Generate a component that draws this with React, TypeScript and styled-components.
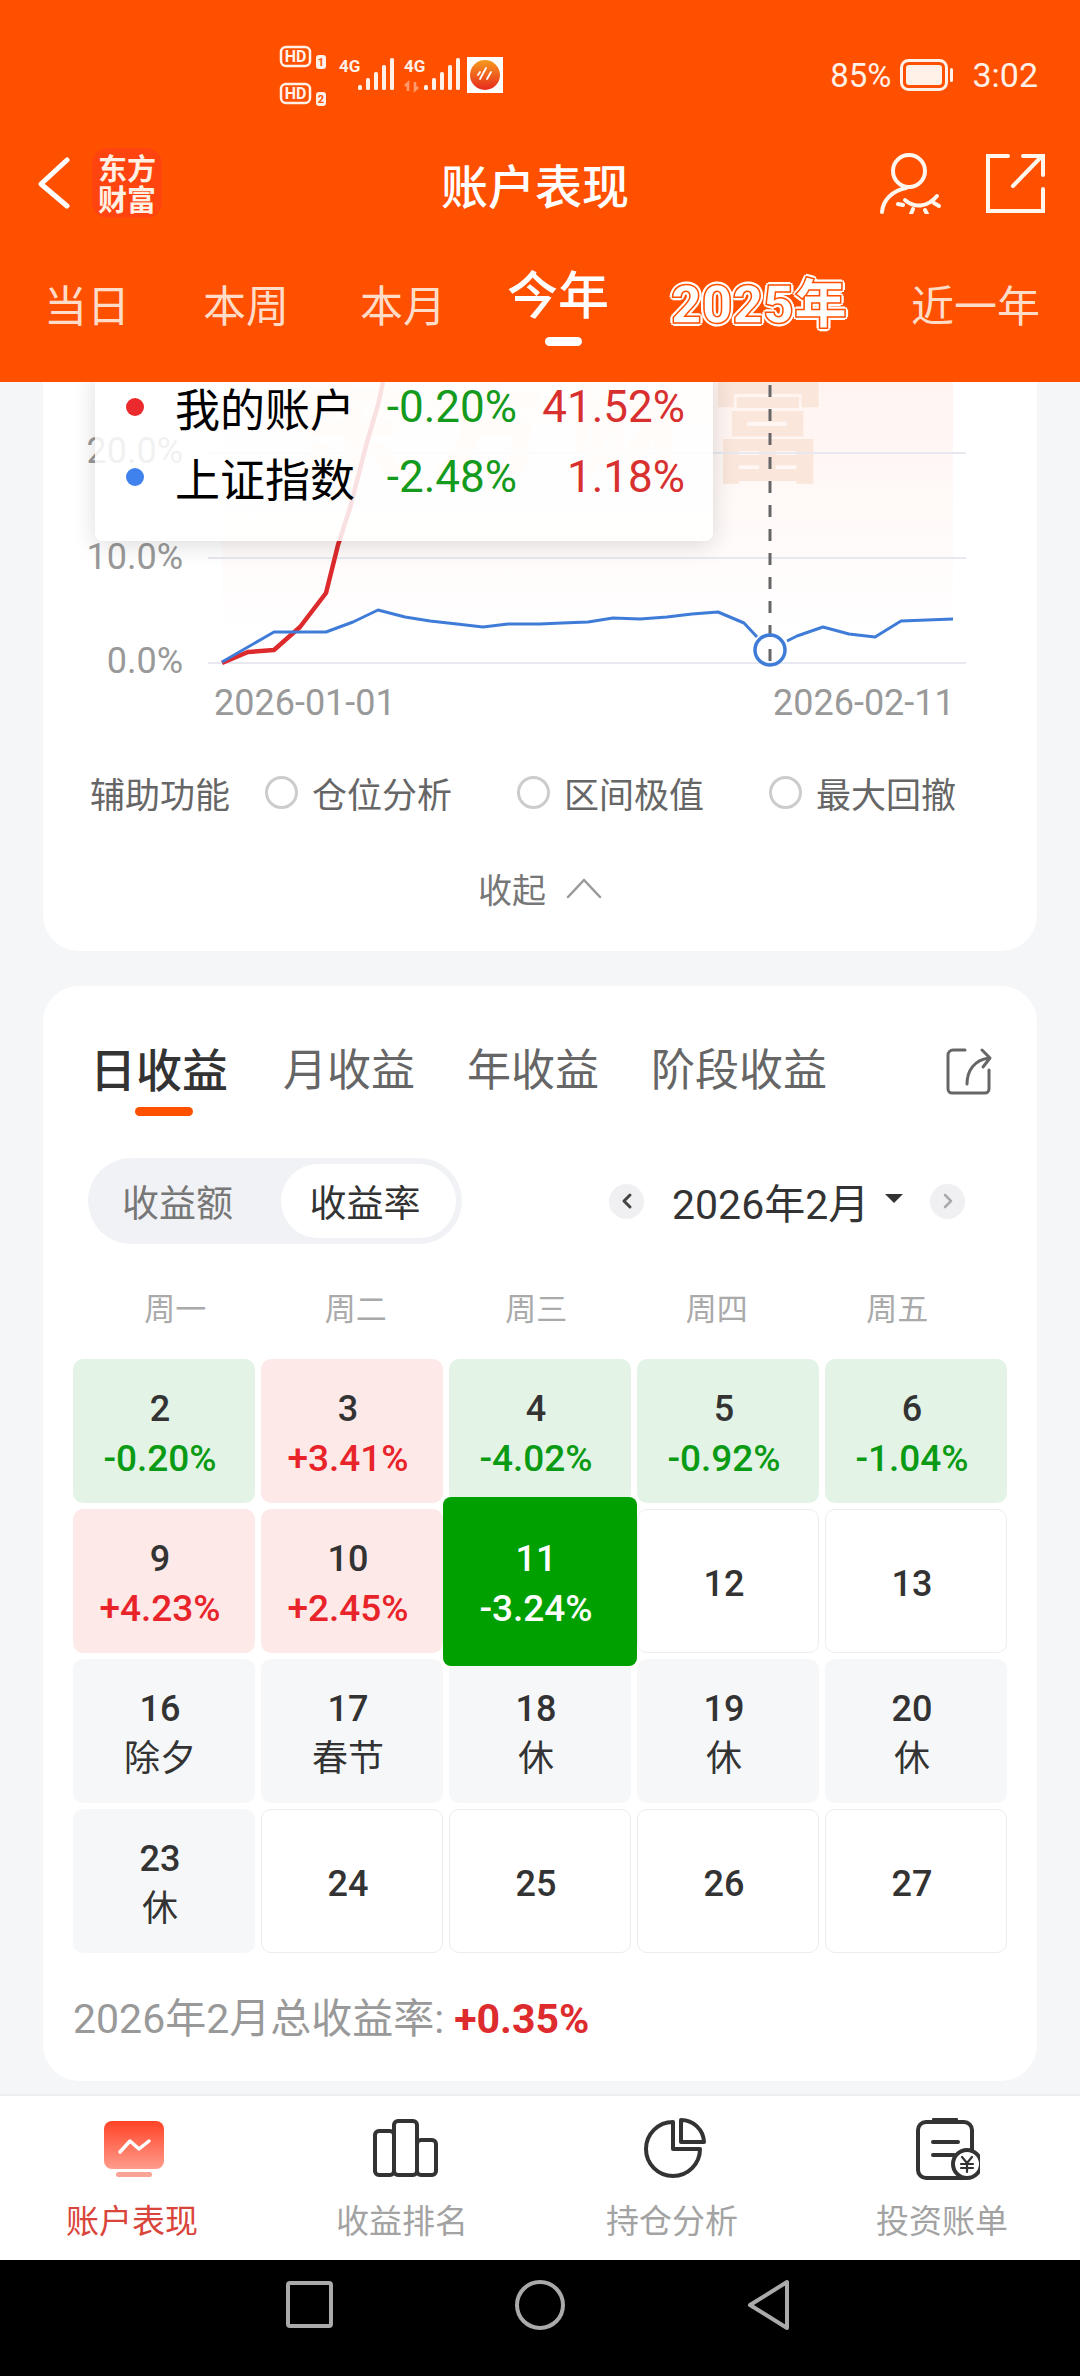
import React from 'react';
import styled, { createGlobalStyle } from 'styled-components';
import { ChevronLeft, ChevronRight } from 'lucide-react';

const GlobalStyle = createGlobalStyle`
  html, body {
    margin: 0;
    padding: 0;
    background: #000;
  }
  * {
    box-sizing: border-box;
  }
`;

const FONT = `Roboto, "Noto Sans CJK SC", sans-serif`;
const ORANGE = '#ff5000';

// ======= Page shell =======
const Page = styled.div`
  width: 1080px;
  height: 2376px;
  display: flex;
  flex-direction: column;
  overflow: hidden;
  font-family: ${FONT};
  background: #f5f6f8;
`;

const Header = styled.header`
  height: 382px;
  flex-shrink: 0;
  background: ${ORANGE};
  color: #fff;
  position: relative;
  z-index: 2;
`;

const StatusBar = styled.div`
  height: 110px;
  padding: 40px 42px 0 275px;
  display: flex;
  align-items: center;
  color: #fff1e8;
  font-size: 33px;
`;

const StatusRight = styled.div`
  margin-left: auto;
  display: flex;
  align-items: center;
  gap: 9px;
`;

const ClockText = styled.span`
  margin-left: 9px;
  font-size: 34px;
`;

const TopBar = styled.div`
  height: 100px;
  margin-top: 23px;
  padding: 0 34px 0 38px;
  display: flex;
  align-items: center;
`;

const BackGroup = styled.div`
  width: 154px;
  display: flex;
  align-items: center;
  gap: 22px;
`;

const LogoBadge = styled.div`
  width: 70px;
  height: 70px;
  flex-shrink: 0;
  border-radius: 16px;
  background: #ff4410;
  color: #fff0e4;
  display: flex;
  align-items: center;
  justify-content: center;
  text-align: center;
  font-size: 29px;
  line-height: 31px;
  font-weight: 700;
  font-family: "Noto Sans CJK SC", sans-serif;
`;

const PageTitle = styled.h1`
  flex: 1;
  margin: 0;
  text-align: center;
  font-size: 47px;
  font-weight: 500;
`;

const TopIcons = styled.div`
  width: 168px;
  display: flex;
  align-items: center;
  justify-content: space-between;
`;

const RangeTabs = styled.nav`
  height: 100px;
  margin-top: 49px;
  padding-left: 44px;
  display: flex;
  align-items: flex-start;
`;

const RangeTab = styled.div<{ $left: number; $active?: boolean; $loud?: boolean }>`
  margin-left: ${(p) => p.$left}px;
  position: relative;
  white-space: nowrap;
  font-size: ${(p) => (p.$active ? 51 : p.$loud ? 53 : 43)}px;
  line-height: ${(p) => (p.$active ? 60 : 50)}px;
  margin-top: ${(p) => (p.$active ? -15 : p.$loud ? -2 : 0)}px;
  font-weight: ${(p) => (p.$active ? 500 : p.$loud ? 900 : 400)};
  color: ${(p) => (p.$active || p.$loud ? '#fff' : '#ffdcc8')};
  ${(p) => p.$loud && `
    -webkit-text-stroke: 1.5px ${ORANGE};
    text-shadow: 3px 0 0 #fff, -3px 0 0 #fff, 0 3px 0 #fff, 0 -3px 0 #fff,
      2px 2px 0 #fff, -2px 2px 0 #fff, 2px -2px 0 #fff, -2px -2px 0 #fff;
  `}
  ${(p) => p.$active && `
    &::after {
      content: '';
      position: absolute;
      left: 38px;
      top: 70px;
      width: 37px;
      height: 9px;
      border-radius: 5px;
      background: #fff;
    }
  `}
`;

// ======= Content =======
const Content = styled.main`
  flex: 1;
  min-height: 0;
  overflow: hidden;
  padding: 0 43px;
  display: flex;
  flex-direction: column;
  gap: 35px;
`;

const Card = styled.section`
  background: #fff;
  border-radius: 36px;
`;

const ChartCard = styled(Card)`
  border-radius: 0 0 36px 36px;
  padding-bottom: 38px;
  overflow: hidden;
`;

const ChartWrap = styled.div`
  position: relative;
  height: 343px;

  svg {
    display: block;
  }
`;

const Tooltip = styled.div`
  position: absolute;
  left: 52px;
  top: -10px;
  width: 618px;
  height: 169px;
  padding-left: 31px;
  border-radius: 8px;
  background: rgba(255, 255, 255, 0.86);
  box-shadow: 0 4px 24px rgba(0, 0, 0, 0.14);
`;

const TipRow = styled.div`
  height: 70px;
  display: grid;
  grid-template-columns: 18px 31px 211px 131px 168px;
  align-items: center;
  font-size: 44px;
`;

const TipDot = styled.i<{ $color: string }>`
  width: 18px;
  height: 18px;
  border-radius: 50%;
  background: ${(p) => p.$color};
`;

const TipName = styled.span`
  grid-column: 3;
  color: #000;
  font-size: 45px;
  white-space: nowrap;
`;

const TipValue = styled.span<{ $color: string }>`
  text-align: right;
  color: ${(p) => p.$color};
`;

const AuxRow = styled.div`
  height: 50px;
  margin-top: 42px;
  padding-left: 47px;
  display: flex;
  align-items: center;
  color: #666;
  font-size: 35px;
`;

const AuxLabel = styled.span`
  width: 175px;
  white-space: nowrap;
`;

const AuxOption = styled.label`
  display: flex;
  align-items: center;
  gap: 14px;
  margin-right: 65px;
  white-space: nowrap;
`;

const RadioDot = styled.span`
  width: 33px;
  height: 33px;
  border-radius: 50%;
  border: 3px solid #ccc;
`;

const CollapseRow = styled.div`
  height: 50px;
  margin-top: 46px;
  display: flex;
  align-items: center;
  justify-content: center;
  gap: 20px;
  color: #777;
  font-size: 34px;
`;

const ProfitCard = styled(Card)`
  padding: 60px 0 37px;
`;

const ProfitTabs = styled.div`
  height: 50px;
  padding: 0 44px 0 47px;
  display: flex;
  align-items: center;
  gap: 52px;
`;

const ProfitTab = styled.div<{ $active?: boolean }>`
  position: relative;
  line-height: 50px;
  font-size: ${(p) => (p.$active ? 46 : 44)}px;
  font-weight: ${(p) => (p.$active ? 500 : 400)};
  color: ${(p) => (p.$active ? '#333' : '#666')};
  margin-right: ${(p) => (p.$active ? 3 : 0)}px;
  white-space: nowrap;
  ${(p) => p.$active && `
    &::after {
      content: '';
      position: absolute;
      left: 45px;
      top: 61px;
      width: 58px;
      height: 9px;
      border-radius: 5px;
      background: ${ORANGE};
    }
  `}
`;

const ShareSlot = styled.div`
  margin-left: auto;
  display: flex;
`;

const ToolRow = styled.div`
  margin-top: 62px;
  padding-left: 45px;
  display: flex;
  align-items: center;
`;

const Segment = styled.div`
  width: 374px;
  height: 86px;
  padding: 6px;
  border-radius: 43px;
  background: #f1f2f5;
  display: flex;
`;

const SegmentItem = styled.div<{ $active?: boolean }>`
  flex: ${(p) => (p.$active ? '0 0 175px' : 1)};
  padding-right: ${(p) => (p.$active ? 7 : 20)}px;
  border-radius: 37px;
  display: flex;
  align-items: center;
  justify-content: center;
  font-size: 37px;
  color: ${(p) => (p.$active ? '#333' : '#777')};
  background: ${(p) => (p.$active ? '#fff' : 'transparent')};
`;

const MonthPicker = styled.div`
  margin-left: 147px;
  display: flex;
  align-items: center;
`;

const RoundButton = styled.div<{ $muted?: boolean }>`
  width: 35px;
  height: 35px;
  border-radius: 50%;
  background: #f0f0f2;
  color: ${(p) => (p.$muted ? '#aaa' : '#444')};
  display: flex;
  align-items: center;
  justify-content: center;
`;

const MonthText = styled.div`
  margin-left: 28px;
  font-size: 41px;
  color: #333;
  white-space: nowrap;
`;

const Caret = styled.i`
  width: 0;
  height: 0;
  margin: -6px 27px 0 16px;
  border-left: 9px solid transparent;
  border-right: 9px solid transparent;
  border-top: 9px solid #333;
`;

const WeekRow = styled.div`
  height: 40px;
  width: 945px;
  margin-top: 40px;
  padding-left: 42px;
  display: grid;
  grid-template-columns: repeat(5, 180.5px);
  align-items: center;
  text-align: center;
  color: #aaa;
  font-size: 31px;
`;

const DayGrid = styled.div`
  margin-top: 35px;
  padding-left: 30px;
  display: grid;
  grid-template-columns: repeat(5, 182px);
  grid-auto-rows: 144px;
  gap: 6px;
`;

type Tone = 'up' | 'down' | 'closed' | 'blank' | 'today';

const toneBg: Record<Tone, string> = {
  up: '#fde9e8',
  down: '#e3f4e6',
  closed: '#f6f7f9',
  blank: '#fff',
  today: '#00a000',
};

const DayCell = styled.div<{ $tone: Tone }>`
  padding: 5px 8px 0 0;
  border-radius: ${(p) => (p.$tone === 'today' ? 8 : 10)}px;
  background: ${(p) => toneBg[p.$tone]};
  border: ${(p) => (p.$tone === 'blank' ? '1px solid #ececec' : 'none')};
  margin: ${(p) => (p.$tone === 'today' ? '-12px -6px -13px' : 0)};
  position: relative;
  z-index: ${(p) => (p.$tone === 'today' ? 1 : 0)};
  display: flex;
  flex-direction: column;
  align-items: center;
  justify-content: center;
  color: ${(p) => (p.$tone === 'today' ? '#fff' : '#333')};
`;

const DayNum = styled.div`
  font-size: 36px;
  line-height: 50px;
  font-weight: 500;
`;

const DayNote = styled.div<{ $tone: Tone }>`
  font-size: ${(p) => (p.$tone === 'closed' ? 36 : 37)}px;
  line-height: 50px;
  font-weight: ${(p) => (p.$tone === 'closed' ? 400 : 500)};
  color: ${(p) => (p.$tone === 'up' ? '#e8242a' : p.$tone === 'down' ? '#0a9a14' : 'inherit')};
`;

const TotalLine = styled.div`
  margin-top: 41px;
  padding-left: 30px;
  line-height: 50px;
  font-size: 41px;
  color: #999;
`;

const TotalValue = styled.b`
  margin-left: 10px;
  font-weight: 700;
  color: #dd2b2e;
`;

// ======= Bottom =======
const BottomNav = styled.nav`
  height: 166px;
  flex-shrink: 0;
  background: #fff;
  border-top: 2px solid #eceded;
  display: grid;
  grid-template-columns: repeat(4, 270px);
`;

const NavItem = styled.div<{ $active?: boolean }>`
  display: flex;
  flex-direction: column;
  align-items: center;
  padding-top: 22px;
  font-size: 33px;
  color: ${(p) => (p.$active ? '#d9453a' : '#a3a3a3')};
`;

const NavIconSlot = styled.div`
  height: 62px;

  svg {
    display: block;
  }
`;

const NavLabel = styled.span`
  margin-top: 19px;
  padding-right: 6px;
  line-height: 46px;
`;

const SystemBar = styled.div`
  height: 116px;
  flex-shrink: 0;
  background: #000;
  display: flex;
  justify-content: flex-start;
  padding: 17px 0 0 284px;
`;

// ======= Data =======
const rangeTabs = [
  { label: '当日', left: 0 },
  { label: '本周', left: 73 },
  { label: '本月', left: 71 },
  { label: '今年', left: 61, active: true },
  { label: '2025年', left: 62, loud: true },
  { label: '近一年', left: 64 },
];

const days: { day: number; note?: string; tone: Tone }[] = [
  { day: 2, note: '-0.20%', tone: 'down' },
  { day: 3, note: '+3.41%', tone: 'up' },
  { day: 4, note: '-4.02%', tone: 'down' },
  { day: 5, note: '-0.92%', tone: 'down' },
  { day: 6, note: '-1.04%', tone: 'down' },
  { day: 9, note: '+4.23%', tone: 'up' },
  { day: 10, note: '+2.45%', tone: 'up' },
  { day: 11, note: '-3.24%', tone: 'today' },
  { day: 12, tone: 'blank' },
  { day: 13, tone: 'blank' },
  { day: 16, note: '除夕', tone: 'closed' },
  { day: 17, note: '春节', tone: 'closed' },
  { day: 18, note: '休', tone: 'closed' },
  { day: 19, note: '休', tone: 'closed' },
  { day: 20, note: '休', tone: 'closed' },
  { day: 23, note: '休', tone: 'closed' },
  { day: 24, tone: 'blank' },
  { day: 25, tone: 'blank' },
  { day: 26, tone: 'blank' },
  { day: 27, tone: 'blank' },
];

const redLine = '222,663 248,652 274,650 300,627 326,593 338,545 350,508 367,442 378,405 383,382';
const blueLine =
  '222,662 274,632 326,632 353,622 378,610 405,617 430,621 457,624 483,627 508,624 540,624 562,623 588,622 613,618 640,619 667,617 692,614 718,612 744,623 757,637';
const blueLineEnd = '787,641 797,636 823,627 849,634 875,637 901,621 953,619';

// ======= Drawings =======
const StatusIcons = () => {
  const bars = (x: number) =>
    [5, 12, 18, 25, 32].map((h, i) => (
      <rect key={i} x={x + i * 8} y={90 - h} width="4" height={h} rx="1.5" fill="#fff1e8" />
    ));
  const chip = (y: number, n: string) => (
    <g>
      <rect x="281" y={y} width="29" height="19" rx="5" fill="none" stroke="#fff1e8" strokeWidth="2.5" />
      <text x="295.5" y={y + 15} fontSize="16" fontWeight="700" fill="#fff1e8" textAnchor="middle">HD</text>
      <rect x="316" y={y + 8} width="10" height="14" rx="3" fill="#fff1e8" />
      <text x="321" y={y + 19} fontSize="11" fontWeight="700" fill={ORANGE} textAnchor="middle">{n}</text>
    </g>
  );
  return (
    <svg width="235" height="70" viewBox="275 40 235 70">
      {chip(47, '1')}
      {chip(84, '2')}
      <text x="339" y="72" fontSize="17" fontWeight="700" fill="#fff1e8">4G</text>
      {bars(358)}
      <text x="404" y="72" fontSize="17" fontWeight="700" fill="#fff1e8">4G</text>
      <path d="M408 91V83l-3 3M415 82v8l3-3" fill="none" stroke="#ff9a70" strokeWidth="2.5" />
      {bars(424)}
      <rect x="467" y="57" width="36" height="36" fill="#fff" />
      <circle cx="485" cy="75" r="15" fill="url(#appGrad)" />
      <path d="M480 72l-2 3M486 68l-6 11M491 72l-4 7" stroke="#fff" strokeWidth="1.8" strokeLinecap="round" />
      <defs>
        <linearGradient id="appGrad" x1="0" y1="0" x2="0" y2="1">
          <stop offset="0" stopColor="#f79a20" />
          <stop offset="1" stopColor="#e62a1c" />
        </linearGradient>
      </defs>
    </svg>
  );
};

const BatteryIcon = () => (
  <svg width="54" height="32" viewBox="0 0 54 32">
    <rect x="1.5" y="1.5" width="45" height="29" rx="7" fill="none" stroke="#fff1e8" strokeWidth="3" />
    <rect x="6" y="6" width="36" height="20" rx="3" fill="#fff1e8" />
    <rect x="50" y="9" width="3" height="14" rx="1.5" fill="#fff1e8" />
  </svg>
);

const BackIcon = () => (
  <svg width="32" height="52" viewBox="0 0 32 52" style={{ flexShrink: 0 }}>
    <path d="M29 3L3 27l26 22" fill="none" stroke="#fff" strokeWidth="5" strokeLinecap="round" strokeLinejoin="round" />
  </svg>
);

const WatchIcon = () => (
  <svg width="66" height="62" viewBox="878 148 66 62">
    <g fill="none" stroke="#fff6ee" strokeWidth="4" strokeLinecap="round">
      <circle cx="909" cy="167" r="16" />
      <path d="M882 208c1-12 10-21 24-24" />
      <path d="M905 196c9 8 22 8 32-4" />
      <path d="M903 201l-5-1M913 205l-2 5M925 206l2 4M934 199l5 3" />
    </g>
  </svg>
);

const ExportIcon = () => (
  <svg width="60" height="60" viewBox="986 150 60 60">
    <g fill="none" stroke="#fff6ee" strokeWidth="4" strokeLinecap="round">
      <path d="M1008 153h-20v55h55v-22" />
      <path d="M1013 183l29-30M1023 153h20v19" />
    </g>
  </svg>
);

const ShareIcon = () => (
  <svg width="48" height="48" viewBox="0 0 48 48">
    <g fill="none" stroke="#666" strokeWidth="3" strokeLinecap="round" strokeLinejoin="round">
      <path d="M20 3H8a5 5 0 0 0-5 5v34a4 4 0 0 0 4 4h33a4 4 0 0 0 4-4V23" />
      <path d="M22 37c0-13 7-24 22-26M37 3l8 8-7 9" />
    </g>
  </svg>
);

const UpChevron = () => (
  <svg width="36" height="22" viewBox="0 0 36 22">
    <path d="M2 20L18 3l16 17" fill="none" stroke="#999" strokeWidth="2.5" strokeLinecap="round" />
  </svg>
);

const PerformanceChart = () => (
  <svg width="994" height="343" viewBox="43 382 994 343" fontFamily={FONT}>
    <defs>
      <linearGradient id="areaFade" x1="0" y1="0" x2="0" y2="1">
        <stop offset="0" stopColor="#fff4f0" />
        <stop offset="0.6" stopColor="#fffbfa" />
        <stop offset="0.9" stopColor="#ffffff" />
      </linearGradient>
    </defs>
    <rect x="222" y="382" width="731" height="281" fill="url(#areaFade)" />
    <text x="290" y="472" fontSize="116" fontWeight="900" letterSpacing="24" fill="#fbe6dc">东方财富</text>
    {[453, 558, 663].map((y) => (
      <line key={y} x1="208" x2="966" y1={y} y2={y} stroke="#e8e9f0" strokeWidth="2" />
    ))}
    <g fontSize="36" fill="#999">
      <text x="183" y="463" textAnchor="end">20.0%</text>
      <text x="183" y="569" textAnchor="end">10.0%</text>
      <text x="183" y="673" textAnchor="end">0.0%</text>
      <text x="214" y="715">2026-01-01</text>
      <text x="773" y="715">2026-02-11</text>
    </g>
    <polyline points={redLine} fill="none" stroke="#dd2a2c" strokeWidth="4.5" strokeLinejoin="round" />
    <polyline points={blueLine} fill="none" stroke="#3f7cd8" strokeWidth="3" strokeLinejoin="round" />
    <polyline points={blueLineEnd} fill="none" stroke="#3f7cd8" strokeWidth="3" strokeLinejoin="round" />
    <line x1="770" x2="770" y1="385" y2="663" stroke="#666" strokeWidth="3" strokeDasharray="12 12" />
    <circle cx="770" cy="650" r="15" fill="none" stroke="#3f7cd8" strokeWidth="3.5" />
  </svg>
);

const NavIcon1 = () => (
  <svg width="70" height="60" viewBox="0 0 70 60">
    <defs>
      <linearGradient id="tvGrad" x1="0" y1="0" x2="0" y2="1">
        <stop offset="0" stopColor="#ff4326" />
        <stop offset="1" stopColor="#ff9c8c" />
      </linearGradient>
    </defs>
    <rect x="4" y="3" width="60" height="48" rx="8" fill="url(#tvGrad)" />
    <rect x="16" y="54" width="36" height="5" rx="2.5" fill="#f9a395" />
    <path d="M20 34l10-11 9 8 10-8" fill="none" stroke="#fff" strokeWidth="3.5" strokeLinecap="round" strokeLinejoin="round" />
  </svg>
);

const NavIcon2 = () => (
  <svg width="70" height="60" viewBox="370 2118 70 60">
    <g fill="none" stroke="#333" strokeWidth="4" strokeLinejoin="round">
      <rect x="375" y="2131" width="19" height="44" rx="4" />
      <rect x="394" y="2121" width="23" height="54" rx="4" />
      <rect x="417" y="2140" width="19" height="35" rx="4" />
    </g>
  </svg>
);

const NavIcon3 = () => (
  <svg width="70" height="60" viewBox="640 2118 70 60">
    <g fill="none" stroke="#333" strokeWidth="4" strokeLinejoin="round">
      <path d="M673 2122a27 27 0 1 0 27 27h-27z" />
      <path d="M681 2120a23 23 0 0 1 23 22h-23z" />
    </g>
  </svg>
);

const NavIcon4 = () => (
  <svg width="70" height="62" viewBox="906 2118 70 62">
    <g fill="none" stroke="#333" strokeLinecap="round">
      <rect x="914" y="2122" width="54" height="56" rx="8" strokeWidth="4" />
      <path d="M930 2119.5h22" strokeWidth="4" />
      <path d="M929 2142h25M929 2155h21" strokeWidth="4" />
      <circle cx="963" cy="2164" r="14" fill="#fff" strokeWidth="4" />
      <path d="M958 2157l5 6 5-6M963 2163v9M957 2164h12M957 2168h12" strokeWidth="2.2" />
    </g>
  </svg>
);

const SystemButtons = () => (
  <svg width="510" height="56" viewBox="284 290 510 56">
    <g fill="none" stroke="#aaa" strokeWidth="4" strokeLinejoin="round">
      <rect x="288" y="296" width="43" height="43" rx="2" />
      <circle cx="540" cy="318" r="23" />
      <path d="M787 295v46l-37-23z" />
    </g>
  </svg>
);

const navItems = [
  { label: '账户表现', icon: <NavIcon1 />, active: true },
  { label: '收益排名', icon: <NavIcon2 /> },
  { label: '持仓分析', icon: <NavIcon3 /> },
  { label: '投资账单', icon: <NavIcon4 /> },
];

const App: React.FC = () => {
  return (
    <Page>
      <GlobalStyle />
      <Header>
        <StatusBar>
          <StatusIcons />
          <StatusRight>
            <span>85%</span>
            <BatteryIcon />
            <ClockText>3:02</ClockText>
          </StatusRight>
        </StatusBar>
        <TopBar>
          <BackGroup>
            <BackIcon />
            <LogoBadge>东方<br />财富</LogoBadge>
          </BackGroup>
          <PageTitle>账户表现</PageTitle>
          <TopIcons>
            <WatchIcon />
            <ExportIcon />
          </TopIcons>
        </TopBar>
        <RangeTabs>
          {rangeTabs.map((t) => (
            <RangeTab key={t.label} $left={t.left} $active={t.active} $loud={t.loud}>
              {t.label}
            </RangeTab>
          ))}
        </RangeTabs>
      </Header>

      <Content>
        <ChartCard>
          <ChartWrap>
            <PerformanceChart />
            <Tooltip>
              <TipRow>
                <TipDot $color="#ea2a2d" />
                <TipName>我的账户</TipName>
                <TipValue $color="#149a1c">-0.20%</TipValue>
                <TipValue $color="#d8302f">41.52%</TipValue>
              </TipRow>
              <TipRow>
                <TipDot $color="#3f82ee" />
                <TipName>上证指数</TipName>
                <TipValue $color="#149a1c">-2.48%</TipValue>
                <TipValue $color="#d8302f">1.18%</TipValue>
              </TipRow>
            </Tooltip>
          </ChartWrap>
          <AuxRow>
            <AuxLabel>辅助功能</AuxLabel>
            {['仓位分析', '区间极值', '最大回撤'].map((o) => (
              <AuxOption key={o}>
                <RadioDot />
                {o}
              </AuxOption>
            ))}
          </AuxRow>
          <CollapseRow>
            收起
            <UpChevron />
          </CollapseRow>
        </ChartCard>

        <ProfitCard>
          <ProfitTabs>
            <ProfitTab $active>日收益</ProfitTab>
            <ProfitTab>月收益</ProfitTab>
            <ProfitTab>年收益</ProfitTab>
            <ProfitTab>阶段收益</ProfitTab>
            <ShareSlot>
              <ShareIcon />
            </ShareSlot>
          </ProfitTabs>
          <ToolRow>
            <Segment>
              <SegmentItem>收益额</SegmentItem>
              <SegmentItem $active>收益率</SegmentItem>
            </Segment>
            <MonthPicker>
              <RoundButton>
                <ChevronLeft size={24} strokeWidth={3} />
              </RoundButton>
              <MonthText>2026年2月</MonthText>
              <Caret />
              <RoundButton $muted>
                <ChevronRight size={24} strokeWidth={2.5} />
              </RoundButton>
            </MonthPicker>
          </ToolRow>
          <WeekRow>
            {['周一', '周二', '周三', '周四', '周五'].map((w) => (
              <span key={w}>{w}</span>
            ))}
          </WeekRow>
          <DayGrid>
            {days.map((d) => (
              <DayCell key={d.day} $tone={d.tone}>
                <DayNum>{d.day}</DayNum>
                {d.note && <DayNote $tone={d.tone}>{d.note}</DayNote>}
              </DayCell>
            ))}
          </DayGrid>
          <TotalLine>
            2026年2月总收益率:<TotalValue>+0.35%</TotalValue>
          </TotalLine>
        </ProfitCard>
      </Content>

      <BottomNav>
        {navItems.map((n) => (
          <NavItem key={n.label} $active={n.active}>
            <NavIconSlot>{n.icon}</NavIconSlot>
            <NavLabel>{n.label}</NavLabel>
          </NavItem>
        ))}
      </BottomNav>
      <SystemBar>
        <SystemButtons />
      </SystemBar>
    </Page>
  );
};

export default App;
